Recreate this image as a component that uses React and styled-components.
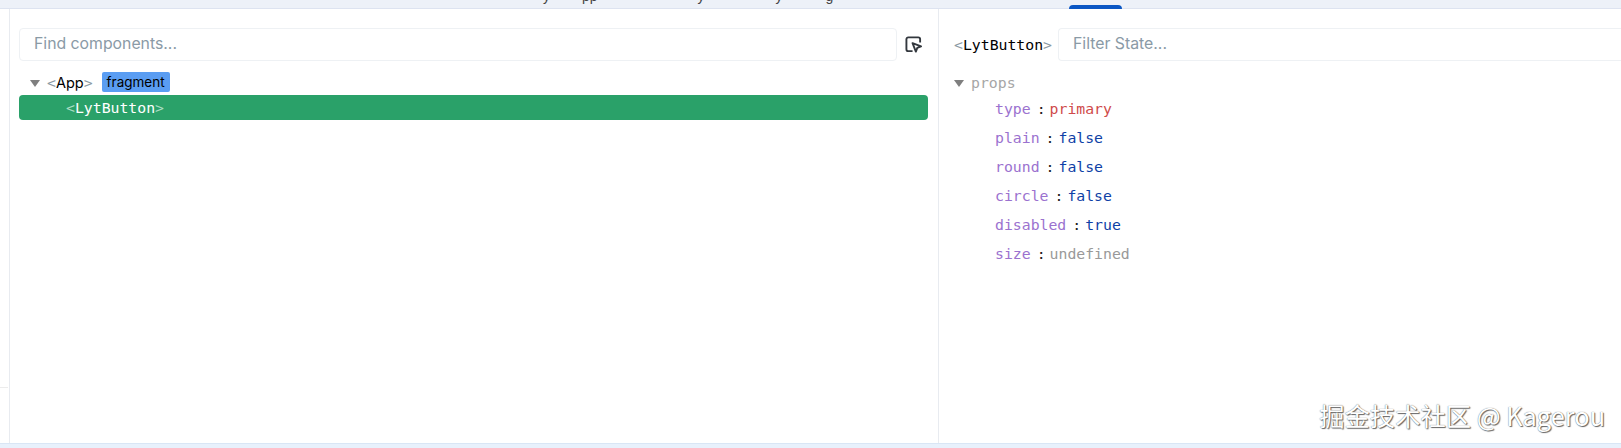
import React from 'react';
import styled, { createGlobalStyle } from 'styled-components';

const Global = createGlobalStyle`
  html, body { margin: 0; padding: 0; background: #fff; }
  #root { width: 1621px; height: 448px; overflow: hidden; }
`
const mono = `"DejaVu Sans Mono", "Liberation Mono", monospace`
const sans = `Inter, "Noto Sans", sans-serif`

const Page = styled.div`
  display: flex;
  flex-direction: column;
  width: 1621px;
  height: 448px;
  position: relative;
  background: #fff;
`
const TopBar = styled.div`
  height: 8px;
  flex: none;
  display: flex;
  align-items: flex-end;
  padding-right: 499px;
  background: #edf1f8;
  border-bottom: 1px solid #dde3f0;
`
const ClippedTitle = styled.div`
  flex: 1;
  height: 8px;
  overflow: hidden;
  display: flex;
  align-items: flex-start;
  padding-left: 543px;
  font: 14px/14px "Liberation Sans", sans-serif;
  color: #444;
`
const TitleBit = styled.span`
  margin-top: -11px;
  margin-left: ${p => p.$gap}px;
`
const ActiveTab = styled.div`
  width: 53px;
  height: 4px;
  flex: none;
  border-radius: 4px 4px 0 0;
  background: #0b57c4;
  margin-bottom: -1px;
`
const Body = styled.div`
  flex: 1;
  display: flex;
  min-height: 0;
`
const SideStrip = styled.div`
  width: 9px;
  flex: none;
  border-right: 1px solid #e8ebf0;
  display: flex;
  flex-direction: column;
`
const StripTop = styled.div`
  height: 378px;
  margin-right: 1px;
  border-bottom: 1px solid #ececec;
`
const TreePane = styled.div`
  width: 929px;
  flex: none;
  border-right: 1px solid #e8ebf0;
  padding: 19px 10px 0 9px;
  box-sizing: border-box;
`
const SearchRow = styled.div`
  display: flex;
  align-items: center;
  gap: 8px;
  padding-right: 6px;
`
const SearchBox = styled.div`
  box-sizing: border-box;
  height: 33px;
  display: flex;
  align-items: center;
  flex: 1;
  padding: 0 0 2px 14px;
  border: 1px solid #eef1f4;
  border-radius: ${p => (p.$open ? '4px 0 0 4px' : '4px')};
  border-right: ${p => (p.$open ? 'none' : '1px solid #eef1f4')};
  font: 15.8px ${sans};
  color: #8a9aa6;
`
const Picker = styled.svg`
  width: 17px;
  height: 17px;
  flex: none;
  fill: none;
  stroke: #33383e;
  stroke-width: 2;
`
const TreeRow = styled.div`
  box-sizing: border-box;
  display: flex;
  align-items: center;
  height: 25px;
  margin-top: ${p => p.$top || 0}px;
  padding: 0 0 1px ${p => p.$indent || 0}px;
  border-radius: 4px;
  background: ${p => (p.$selected ? '#2aa169' : 'transparent')};
  color: ${p => (p.$selected ? '#fff' : '#000')};
  font: 14.8px ${mono};
`
const Caret = styled.span`
  width: 0;
  height: 0;
  flex: none;
  margin-right: ${p => p.$gap}px;
  margin-top: 2px;
  border-left: 5.5px solid transparent;
  border-right: 5.5px solid transparent;
  border-top: 7px solid #7f7f7f;
`
const Bracket = styled.span`
  color: ${p => (p.$light ? '#a9dcc2' : '#8b9aa3')};
`
const AppName = styled.span`
  font: 14.5px ${sans};
`
const Badge = styled.span`
  margin-left: 9px;
  height: 20px;
  padding: 0 5px;
  display: flex;
  align-items: center;
  border-radius: 2px;
  background: #5a9df2;
  color: #000;
  font: 13.5px ${sans};
`
const StatePane = styled.div`
  flex: 1;
  padding: 19px 0 0 15px;
  min-width: 0;
`
const StateHeader = styled.div`
  display: flex;
  align-items: center;
  font: 14.8px ${mono};
  color: #000;
`
const HeaderName = styled.span`
  width: 104px;
  flex: none;
  margin-top: -1px;
`
const PropsHead = styled.div`
  display: flex;
  align-items: center;
  height: 23px;
  margin-top: 10px;
  font: 14.8px ${mono};
  color: #a6a6a6;
`
const PropRow = styled.div`
  display: flex;
  align-items: center;
  height: 29px;
  padding-left: 41px;
  font: 14.8px ${mono};
`
const PropKey = styled.span`
  color: #9b72cf;
`
const Colon = styled.span`
  color: #222;
  margin: 0 4px 0 6px;
`
const PropValue = styled.span`
  color: ${p => p.$color};
`
const BottomBar = styled.div`
  height: 4px;
  flex: none;
  background: #e8f1fc;
  border-top: 1px solid #d9e6f5;
`
const Watermark = styled.div`
  position: absolute;
  right: 16px;
  top: 397px;
  font: 25.3px "Noto Sans CJK SC", "Noto Sans", sans-serif;
  color: #fff;
  text-shadow: 0 0 1px #555, 1px 1px 1px #666;
`

const titleBits = [
  ['y', 0],
  ['pp', 32],
  ['y', 100],
  ['y', 71],
  ['g', 43],
]

const props = [
  ['type', 'primary', '#cf4a4a'],
  ['plain', 'false', '#0f3fa6'],
  ['round', 'false', '#0f3fa6'],
  ['circle', 'false', '#0f3fa6'],
  ['disabled', 'true', '#0f3fa6'],
  ['size', 'undefined', '#999'],
]

export default function App() {
  return (
    <Page>
      <Global />
      <TopBar>
        <ClippedTitle>
          {titleBits.map(([text, gap], i) => (
            <TitleBit key={i} $gap={gap}>{text}</TitleBit>
          ))}
        </ClippedTitle>
        <ActiveTab />
      </TopBar>
      <Body>
        <SideStrip><StripTop /></SideStrip>
        <TreePane>
          <SearchRow>
            <SearchBox>Find components...</SearchBox>
            <Picker viewBox="0 0 18 18">
              <path d="M8 16H3.500A2 2 0 0 1 1.500 14V3.500A2 2 0 0 1 3.500 1.500H14A2 2 0 0 1 16 3.500V7" />
              <path d="M8 7.500l9 3.500-4 1.500-1.500 4z" strokeLinejoin="round" />
            </Picker>
          </SearchRow>
          <TreeRow $top={9} $indent={11}>
            <Caret $gap={7} />
            <Bracket>&lt;</Bracket><AppName>App</AppName><Bracket>&gt;</Bracket>
            <Badge>fragment</Badge>
          </TreeRow>
          <TreeRow $indent={47} $selected>
            <Bracket $light>&lt;</Bracket>LytButton<Bracket $light>&gt;</Bracket>
          </TreeRow>
        </TreePane>
        <StatePane>
          <StateHeader>
            <HeaderName><Bracket>&lt;</Bracket>LytButton<Bracket>&gt;</Bracket></HeaderName>
            <SearchBox $open>Filter State...</SearchBox>
          </StateHeader>
          <PropsHead>
            <Caret $gap={7} />props
          </PropsHead>
          {props.map(([key, value, color]) => (
            <PropRow key={key}>
              <PropKey>{key}</PropKey>
              <Colon>:</Colon>
              <PropValue $color={color}>{value}</PropValue>
            </PropRow>
          ))}
        </StatePane>
      </Body>
      <BottomBar />
      <Watermark>掘金技术社区 @ Kagerou</Watermark>
    </Page>
  );
}
